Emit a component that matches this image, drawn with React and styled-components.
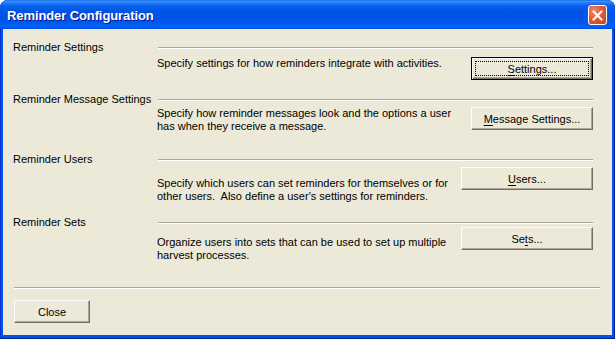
import styled, { createGlobalStyle } from 'styled-components';

const sections = [
  {
    label: 'Reminder Settings',
    desc: 'Specify settings for how reminders integrate with activities.',
    btn: ['', 'S', 'ettings...'],
    h: 52, top: 3, descTop: 0, w: 122, isDefault: true,
  },
  {
    label: 'Reminder Message Settings',
    desc: 'Specify how reminder messages look and the options a user has when they receive a message.',
    btn: ['', 'M', 'essage Settings...'],
    h: 60, top: 1, descTop: 0, w: 122,
  },
  {
    label: 'Reminder Users',
    desc: "Specify which users can set reminders for themselves or for other users.\u00a0 Also define a user's settings for reminders.",
    btn: ['', 'U', 'sers...'],
    h: 63, top: 1, descTop: 10, w: 132,
  },
  {
    label: 'Reminder Sets',
    desc: 'Organize users into sets that can be used to set up multiple harvest processes.',
    btn: ['Se', 't', 's...'],
    h: 0, top: -2, descTop: 9, w: 132,
  },
];

export default function App() {
  return (
    <>
      <Global />
      <Window>
        <TitleBar>
          <Title>Reminder Configuration</Title>
          <CloseX aria-label="Close">
            <svg width="11" height="11" viewBox="0 0 11 11">
              <path d="M1.5 1.5 L9.5 9.5 M9.5 1.5 L1.5 9.5" stroke="#fff" strokeWidth="2" strokeLinecap="square" />
            </svg>
          </CloseX>
        </TitleBar>

        <Client>
          {sections.map((s, i) => (
            <Section key={i} $h={s.h}>
              <Header>
                <Label>{s.label}</Label>
                <Rule />
              </Header>
              <Body $top={s.top}>
                <Desc $top={s.descTop}>{s.desc}</Desc>
                <Button $w={s.w} $default={s.isDefault}>
                  {s.btn[0]}<u>{s.btn[1]}</u>{s.btn[2]}
                </Button>
              </Body>
            </Section>
          ))}

          <Footer>
            <Rule />
            <Button $w={76}>Close</Button>
          </Footer>
        </Client>
      </Window>
    </>
  );
}

const Global = createGlobalStyle`
  html, body {
    margin: 0;
    padding: 0;
    background: #fff;
  }
  body {
    font-family: "Liberation Sans", Arial, sans-serif;
    font-size: 11px;
    color: #000;
  }
`;

const Window = styled.div`
  width: 615px;
  height: 339px;
  display: flex;
  flex-direction: column;
  box-sizing: border-box;
  background: #0055e5;
  border-radius: 8px 8px 0 0;
  box-shadow: inset 1px 0 #0831d9, inset -1px 0 #001ea0, inset 0 -1px #001ea0;
  overflow: hidden;
`;

const TitleBar = styled.div`
  height: 29px;
  flex: none;
  display: flex;
  align-items: center;
  justify-content: space-between;
  padding: 1px 8px 0 7px;
  box-sizing: border-box;
  background: linear-gradient(
    to bottom,
    #0a5fdc 0,
    #3d95ff 1px,
    #1e78f6 3px,
    #0860ec 6px,
    #0054e6 11px,
    #0053e8 18px,
    #0059ee 24px,
    #0062f6 26px,
    #005af0 28px,
    #004ed8 29px
  );
`;

const Title = styled.span`
  color: #fff;
  font-family: "Liberation Sans", Arial, sans-serif;
  font-weight: bold;
  font-size: 13px;
  letter-spacing: -0.1px;
  text-shadow: 1px 1px #0a1883;
`;

const CloseX = styled.div`
  width: 19px;
  height: 20px;
  box-sizing: border-box;
  border: 1px solid #fff;
  border-radius: 3px;
  display: flex;
  align-items: center;
  justify-content: center;
  background: radial-gradient(circle at 30% 30%, #f08a6a 0, #e05a33 45%, #c8401e 100%);
  box-shadow: 0 0 0 0.5px #3a5fc8;
`;

const Client = styled.div`
  flex: 1;
  display: flex;
  flex-direction: column;
  margin: 0 3px 4px 3px;
  padding: 12px 19px 0 10px;
  background: #ece9d8;
`;

const Section = styled.section`
  display: flex;
  flex-direction: column;
  height: ${p => (p.$h ? `${p.$h}px` : 'auto')};
  flex: ${p => (p.$h ? 'none' : '1')};
`;

const Header = styled.div`
  display: grid;
  grid-template-columns: 145px 1fr;
  align-items: center;
  height: 13px;
`;

const Label = styled.div`
  line-height: 13px;
  white-space: nowrap;
`;

const Rule = styled.div`
  height: 0;
  border-top: 1px solid #aca899;
  border-bottom: 1px solid #fff;
`;

const Body = styled.div`
  display: flex;
  justify-content: space-between;
  align-items: flex-start;
  margin: ${p => p.$top}px 0 0 144px;
`;

const Desc = styled.p`
  margin: ${p => p.$top}px 0 0;
  width: 300px;
  line-height: 12.5px;
`;

const Button = styled.button`
  position: relative;
  width: ${p => p.$w}px;
  height: 23px;
  padding: 0;
  font-family: "Liberation Sans", Arial, sans-serif;
  font-size: 11px;
  color: #000;
  background: #ece9d8;
  box-sizing: border-box;
  border: 1px solid;
  border-color: ${p => (p.$default ? '#000' : '#fff #716f64 #716f64 #fff')};
  box-shadow: ${p =>
    p.$default
      ? 'inset 1px 1px #fff, inset -1px -1px #716f64, inset -2px -2px #aca899'
      : 'inset -1px -1px #aca899'};

  &::after {
    content: '';
    display: ${p => (p.$default ? 'block' : 'none')};
    position: absolute;
    inset: 3px;
    border: 1px dotted #000;
  }

  u {
    text-decoration-thickness: 1px;
    text-underline-offset: 2px;
  }
`;

const Footer = styled.div`
  display: flex;
  flex-direction: column;
  align-items: flex-start;
  gap: 11px;
  margin: 0 -7px 0 1px;
  padding-bottom: 12px;

  > div {
    align-self: stretch;
  }
`;
